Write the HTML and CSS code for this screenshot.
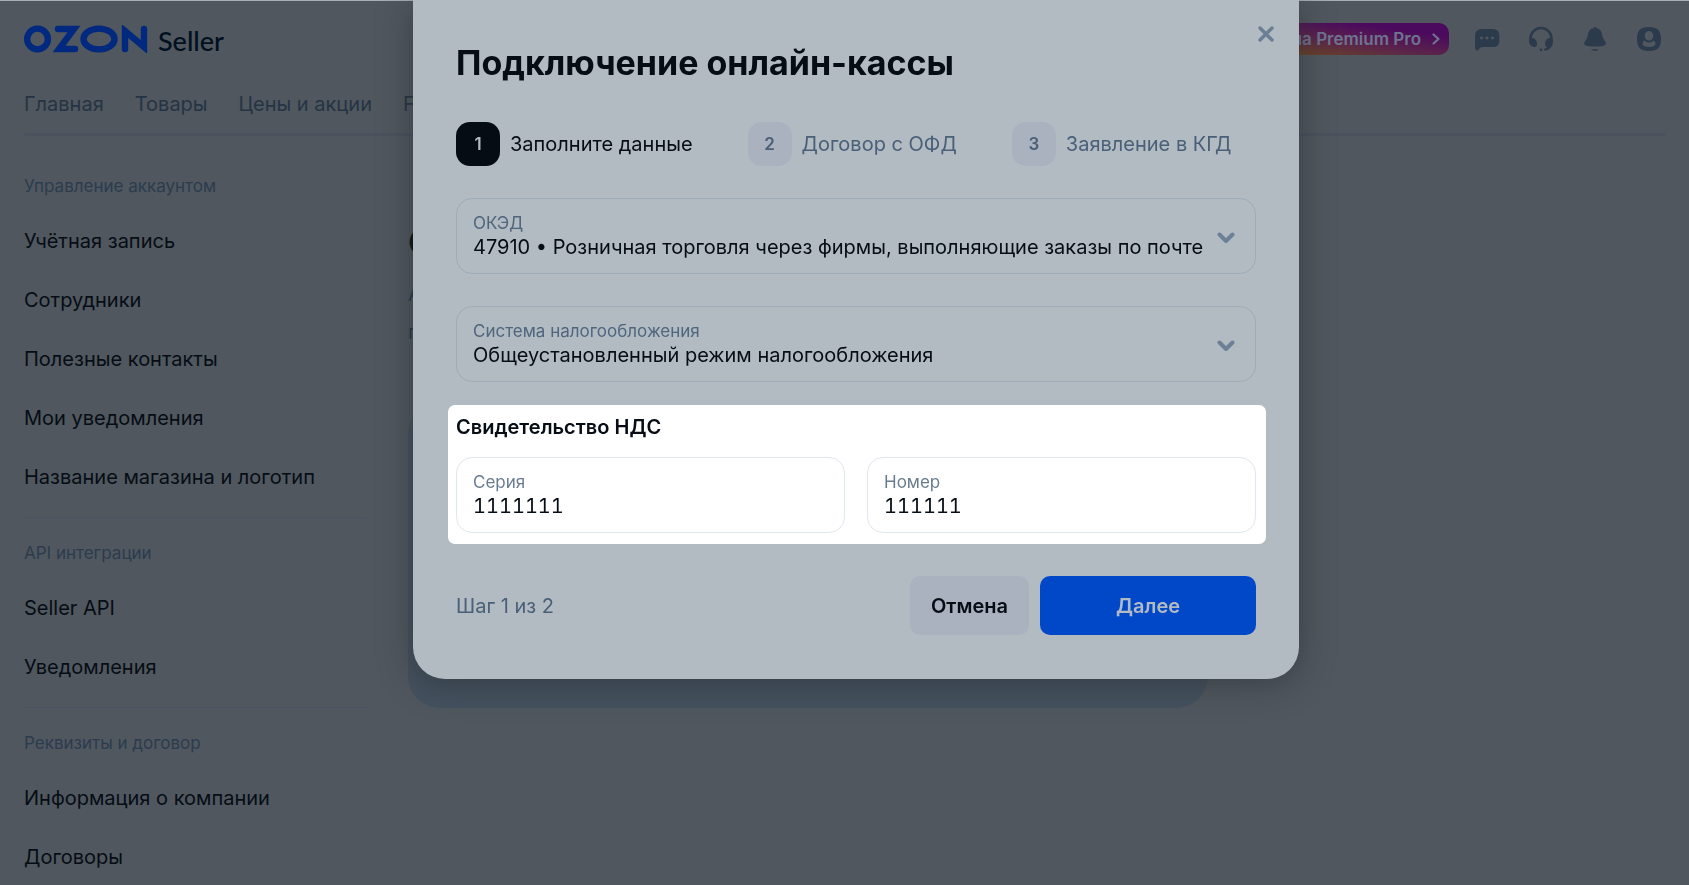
FILE: index.html
```html
<!DOCTYPE html>
<html lang="ru">
<head>
<meta charset="utf-8">
<title>Ozon Seller — Подключение онлайн-кассы</title>
<meta name="viewport" content="width=device-width, initial-scale=1">
<link rel="stylesheet" href="styles.css">
</head>
<body>
<div class="page">
  <header class="header">
    <div class="topbar">
      <a class="logo" href="#" aria-label="Ozon Seller">
        <svg class="logo-mark" viewBox="0 0 124 28" width="124" height="28" aria-hidden="true">
          <g fill="none" stroke="currentColor" stroke-width="6.400" stroke-linejoin="round" stroke-linecap="round">
            <circle cx="13.500" cy="14" r="10.400"/>
            <path d="M34 4H50L35 24H51" stroke-linejoin="miter"/>
            <ellipse cx="75" cy="14" rx="15.500" ry="10.400"/>
            <path d="M101 24V6L120 22V4" stroke-linejoin="miter"/>
          </g>
        </svg>
        <span class="logo-text">Seller</span>
      </a>
      <div class="tools">
        <a class="promo" href="#">Подписка на Premium Pro
          <svg viewBox="0 0 8 12" width="8" height="12" aria-hidden="true"><path d="M1.500 1.500L6.500 6L1.500 10.500" fill="none" stroke="currentColor" stroke-width="2.200" stroke-linecap="round" stroke-linejoin="round"/></svg>
        </a>
        <button class="tool" type="button" aria-label="Сообщения">
          <svg viewBox="0 0 24 24" width="24" height="24"><path fill="currentColor" fill-rule="evenodd" d="M7 2H18Q24.300 2 24.300 9V14Q24.300 20 18 20H8Q5 20 4 22Q3 24 1.500 23.500Q0 23 0 20V9Q0 2 7 2ZM6.500 9.600a1.500 1.500 0 1 0 .01 0ZM12 9.600a1.500 1.500 0 1 0 .01 0ZM17.500 9.600a1.500 1.500 0 1 0 .01 0Z"/></svg>
        </button>
        <button class="tool" type="button" aria-label="Поддержка">
          <svg viewBox="0 0 24 24" width="24" height="24"><path d="M1.500 14V11.500A10.500 10.500 0 0 1 22.500 11.500V15Q22.500 20.500 16.500 22.500" fill="none" stroke="currentColor" stroke-width="2.600" stroke-linecap="round"/><g fill="currentColor"><path d="M1 12Q2 10.500 4.500 11Q8.500 13 8 18Q7.500 20.500 4.500 20Q0 18.500 0 14ZM23 12Q22 10.500 19.500 11Q15.500 13 16 18Q16.500 20.500 19.500 20Q24 18.500 24 14Z"/><circle cx="12" cy="22.800" r="1.400"/></g></svg>
        </button>
        <button class="tool" type="button" aria-label="Уведомления">
          <svg viewBox="0 0 24 24" width="24" height="24"><g fill="currentColor"><path d="M10.500 1.300Q10.500 0 12 0T13.500 1.300Q18 2 19 7Q19.500 11.500 21.500 13.500Q24 16.500 22 18Q19.500 19.500 12 19.500T2 18Q0 16.500 2.500 13.500Q4.500 11.500 5 7Q6 2 10.500 1.300Z"/><path d="M8 22Q12 22.500 16 22Q14.500 24 12 24T8 22Z"/></g></svg>
        </button>
        <button class="tool" type="button" aria-label="Профиль">
          <svg viewBox="0 0 24 24" width="24" height="24"><path fill="currentColor" fill-rule="evenodd" d="M12 0C20.500 0 24 3.500 24 12S20.500 24 12 24S0 20.500 0 12S3.500 0 12 0ZM12 4A4.300 4.800 0 1 0 12 13.600A4.300 4.800 0 1 0 12 4ZM7.500 13.500Q5 15 5.500 17.500Q7 20 12 20T18.500 17.500Q19 15 16.500 13.500Q15 15.500 12 15.500T7.500 13.500Z"/></svg>
        </button>
      </div>
    </div>
    <nav class="nav">
      <a href="#">Главная</a>
      <a href="#">Товары</a>
      <a href="#">Цены и акции</a>
      <a href="#">FBO</a>
    </nav>
  </header>
  <div class="body">
    <aside class="sidebar">
      <section class="group">
        <h2 class="group-title">Управление аккаунтом</h2>
        <a href="#">Учётная запись</a>
        <a href="#">Сотрудники</a>
        <a href="#">Полезные контакты</a>
        <a href="#">Мои уведомления</a>
        <a href="#">Название магазина и логотип</a>
      </section>
      <section class="group">
        <h2 class="group-title">API интеграции</h2>
        <a href="#">Seller API</a>
        <a href="#">Уведомления</a>
      </section>
      <section class="group">
        <h2 class="group-title">Реквизиты и договор</h2>
        <a href="#">Информация о компании</a>
        <a href="#">Договоры</a>
      </section>
    </aside>
    <main class="content">
      <h2 class="content-title">О</h2>
      <p class="content-text">А<br>п</p>
      <div class="card"></div>
    </main>
  </div>
</div>

<div class="overlay">
  <form class="modal" role="dialog" aria-labelledby="dialog-title">
    <button class="close" type="button" aria-label="Закрыть">
      <svg viewBox="0 0 16 16" width="16" height="16"><path d="M2 2L14 14M14 2L2 14" fill="none" stroke="currentColor" stroke-width="3.400" stroke-linecap="round"/></svg>
    </button>
    <h1 class="title" id="dialog-title">Подключение онлайн-кассы</h1>
    <ol class="steps">
      <li class="step step-active"><span class="step-number">1</span>Заполните данные</li>
      <li class="step"><span class="step-number">2</span>Договор с ОФД</li>
      <li class="step"><span class="step-number">3</span>Заявление в КГД</li>
    </ol>
    <div class="selects">
      <div class="field">
        <label for="oked">ОКЭД</label>
        <select id="oked"><option>47910 • Розничная торговля через фирмы, выполняющие заказы по почте</option></select>
        <svg class="chevron" viewBox="0 0 18 12" width="18" height="12" aria-hidden="true"><path d="M2.500 2.500L9 9L15.500 2.500" fill="none" stroke="currentColor" stroke-width="4" stroke-linecap="round" stroke-linejoin="round"/></svg>
      </div>
      <div class="field">
        <label for="tax">Система налогообложения</label>
        <select id="tax"><option>Общеустановленный режим налогообложения</option></select>
        <svg class="chevron" viewBox="0 0 18 12" width="18" height="12" aria-hidden="true"><path d="M2.500 2.500L9 9L15.500 2.500" fill="none" stroke="currentColor" stroke-width="4" stroke-linecap="round" stroke-linejoin="round"/></svg>
      </div>
    </div>
    <fieldset class="spotlight">
      <legend class="spotlight-title">Свидетельство НДС</legend>
      <div class="pair">
        <div class="field">
          <label for="series">Серия</label>
          <input class="digits" id="series" type="text" value="1111111">
        </div>
        <div class="field">
          <label for="number">Номер</label>
          <input class="digits" id="number" type="text" value="111111">
        </div>
      </div>
    </fieldset>
    <footer class="footer">
      <span class="progress">Шаг 1 из 2</span>
      <button class="btn btn-cancel" type="button">Отмена</button>
      <button class="btn btn-next" type="button">Далее</button>
    </footer>
  </form>
</div>
</body>
</html>
```
FILE: styles.css
```css
* { box-sizing: border-box; }

body {
  margin: 0;
  height: 100vh;
  overflow: hidden;
  border-top: 1px solid #a6aeb6;
  background: #50575e;
  color: #060d15;
  font: 20px/24px Inter, "Noto Sans", sans-serif;
}

a { color: inherit; text-decoration: none; }
button { border: 0; padding: 0; background: none; color: inherit; font: inherit; }
h1, h2, p, ol { margin: 0; padding: 0; }

/* Page header */
.header { margin: 0 24px; border-bottom: 3px solid #4b515d; border-radius: 2px; }
.topbar { display: flex; align-items: center; justify-content: space-between; padding: 22px 4px 0 0; }
.logo { display: flex; align-items: flex-start; gap: 10px; height: 32px; color: #00297f; }
.logo-mark { display: block; margin-top: 2px; }
.logo-text { color: #00101f; font: 500 27px/36px Lato, sans-serif; }
.tools { display: flex; align-items: center; gap: 30px; }
.promo {
  display: flex;
  align-items: center;
  gap: 11px;
  height: 32px;
  margin-right: -4px;
  padding: 0 9px 0 16px;
  border-radius: 10px;
  background: linear-gradient(8deg, #69471f 20%, #5c2748 48%, #4b0a5e 80%);
  color: #6f7390;
  font-size: 17px;
  font-weight: 600;
}
.tool { display: flex; color: #2c3b4c; }
.tool svg { overflow: visible; }
.nav { display: flex; gap: 31px; padding: 37px 0 17px; color: #253444; }

/* Sidebar and page content */
.body { display: flex; gap: 41px; padding: 25px 24px 0; }
.sidebar { flex: 0 0 343px; }
.group + .group { margin-top: 10px; padding-top: 10px; border-top: 1px solid #485260; }
.group-title { color: #2b3c4f; font-size: 17px; font-weight: 400; line-height: 51px; }
.group a { display: block; line-height: 59px; }
.content { flex: 0 1 800px; }
.content-title { padding-top: 61px; font-size: 36px; line-height: 40px; }
.content-text { padding-top: 13px; color: #25374a; line-height: 38px; }
.card { height: 306px; margin-top: 51px; border-radius: 32px; background: #44515f; }

/* Dialog */
.overlay {
  position: fixed;
  inset: 0;
  display: flex;
  justify-content: center;
  align-items: flex-start;
  padding-left: 23px;
}
.modal {
  position: relative;
  width: 886px;
  padding: 42px 43px 44px;
  border-radius: 0 0 32px 32px;
  background: #b2bac2;
  box-shadow: 0 4px 32px rgba(40, 46, 50, .6);
}
.close { position: absolute; top: 26px; right: 25px; display: flex; color: #6a7f94; }
.title { font-size: 34px; line-height: 42px; font-weight: 700; }
.steps { display: flex; gap: 55px; margin-top: 38px; list-style: none; color: #4a6078; }
.step { display: flex; align-items: center; gap: 10px; }
.step-number {
  display: grid;
  place-items: center;
  width: 44px;
  height: 44px;
  border-radius: 14px;
  background: #abb2bf;
  font-size: 17px;
  font-weight: 600;
}
.step-active { color: #060d15; }
.step-active .step-number { background: #050c14; color: #b2bac2; }

.selects { display: grid; gap: 32px; margin-top: 32px; }
.field {
  display: grid;
  grid-template-columns: 1fr auto;
  align-content: center;
  height: 76px;
  padding: 0 20px 2px 16px;
  border: 1px solid #9eacba;
  border-radius: 16px;
}
.field label { color: #4f667d; font-size: 17px; }
.field select, .field input {
  grid-column: 1;
  min-width: 0;
  height: 24px;
  padding: 0;
  border: 0;
  outline: 0;
  appearance: none;
  background: none;
  color: inherit;
  font: inherit;
}
.field .digits { font-feature-settings: "tnum"; }
.chevron { grid-column: 2; grid-row: 1 / 3; align-self: center; margin-top: 6px; color: #6c8196; }

.spotlight {
  margin: 23px -10px 0 -8px;
  padding: 10px 10px 11px 8px;
  border: 0;
  border-radius: 7px;
  background: #fff;
}
.spotlight-title { float: left; width: 100%; padding: 0; font-weight: 600; }
.pair { clear: both; display: grid; grid-template-columns: 1fr 1fr; gap: 22px; padding-top: 18px; }
.spotlight .field { border-color: #dfe7ef; }
.spotlight label { color: #6a7d90; }

.footer { display: flex; align-items: center; gap: 11px; margin-top: 32px; }
.progress { margin-right: auto; color: #4a6078; }
.btn { height: 59px; border-radius: 10px; font-weight: 600; }
.btn-cancel { width: 119px; background: #abb2bf; }
.btn-next { width: 216px; background: #0048c8; color: #b2bac2; }
```
